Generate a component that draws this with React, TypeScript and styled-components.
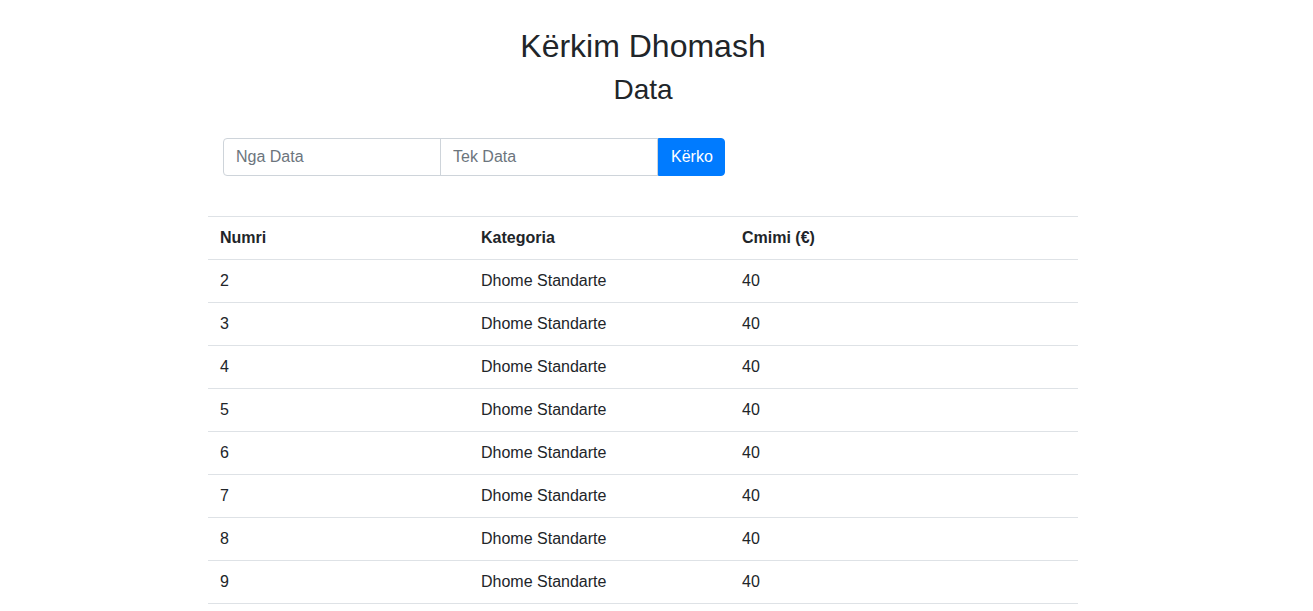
import React from "react";
import styled, { createGlobalStyle } from "styled-components";

const GlobalStyle = createGlobalStyle`
  html, body {
    margin: 0;
    padding: 0;
    background: #ffffff;
  }
  body {
    font-family: "Liberation Sans", Arial, sans-serif;
    font-size: 16px;
    color: #212529;
    overflow: hidden;
  }
  * { box-sizing: border-box; }
`;

const Page = styled.div`
  width: 1286px;
  padding-top: 27px;
`;

const Title = styled.h2`
  margin: 0 0 8px;
  font-size: 32px;
  font-weight: 400;
  line-height: 1.2;
  text-align: center;
`;

const Subtitle = styled.h3`
  margin: 0 0 8px;
  font-size: 28px;
  font-weight: 400;
  line-height: 1.2;
  text-align: center;
`;

const Content = styled.div`
  width: 870px;
  margin: 0 auto;
`;

const SearchForm = styled.form`
  display: flex;
  margin: 31px 0 40px 15px;
  height: 38px;
`;

const DateInput = styled.input<{ $first?: boolean }>`
  width: 218px;
  height: 38px;
  margin-left: ${(p) => (p.$first ? "0" : "-1px")};
  padding: 6px 12px;
  font-family: inherit;
  font-size: 16px;
  color: #495057;
  border: 1px solid #ced4da;
  border-radius: ${(p) => (p.$first ? "4px 0 0 4px" : "0")};
  outline: none;
  background: #fff;
  &::placeholder {
    color: #6c757d;
    opacity: 1;
  }
`;

const SearchButton = styled.button`
  width: 67px;
  height: 38px;
  padding: 6px 12px;
  font-family: inherit;
  font-size: 16px;
  color: #fff;
  background: #007bff;
  border: 1px solid #007bff;
  border-radius: 0 4px 4px 0;
  cursor: pointer;
`;

const Table = styled.table`
  width: 870px;
  border-collapse: collapse;
  border-bottom: 1px solid #dee2e6;
  color: #212529;
`;

const HeadCell = styled.th<{ $w?: number }>`
  width: ${(p) => (p.$w ? `${p.$w}px` : "auto")};
  padding: 12px;
  border-top: 1px solid #dee2e6;
  text-align: left;
  font-weight: 700;
  line-height: 18px;
`;

const Cell = styled.td`
  padding: 12px;
  border-top: 1px solid #dee2e6;
  line-height: 18px;
`;

const rows = [2, 3, 4, 5, 6, 7, 8, 9];

export default function App() {
  return (
    <Page>
      <GlobalStyle />
      <Title>Kërkim Dhomash</Title>
      <Subtitle>Data</Subtitle>
      <Content>
        <SearchForm onSubmit={(e) => e.preventDefault()}>
          <DateInput $first placeholder="Nga Data" />
          <DateInput placeholder="Tek Data" />
          <SearchButton type="submit">Kërko</SearchButton>
        </SearchForm>
        <Table>
          <thead>
            <tr>
              <HeadCell $w={261}>Numri</HeadCell>
              <HeadCell $w={261}>Kategoria</HeadCell>
              <HeadCell>Cmimi (€)</HeadCell>
            </tr>
          </thead>
          <tbody>
            {rows.map((n) => (
              <tr key={n}>
                <Cell>{n}</Cell>
                <Cell>Dhome Standarte</Cell>
                <Cell>40</Cell>
              </tr>
            ))}
          </tbody>
        </Table>
      </Content>
    </Page>
  );
}
